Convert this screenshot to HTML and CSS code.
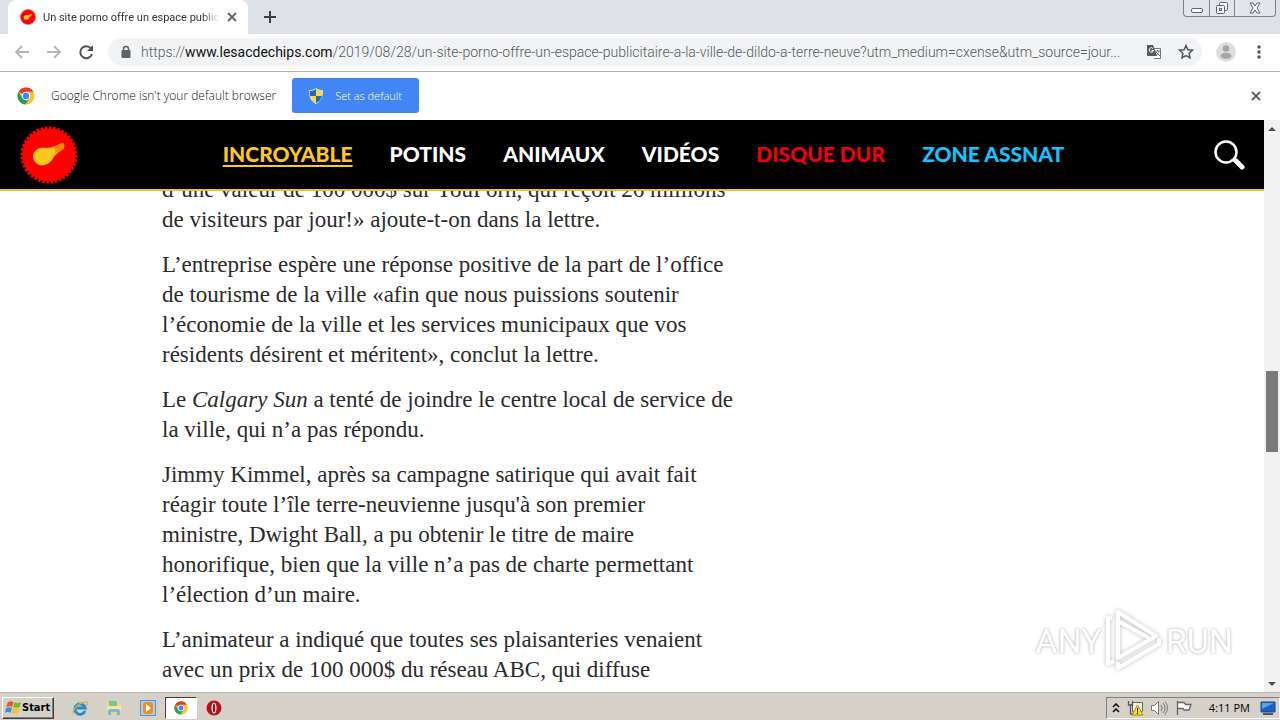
FILE: index.html
```html
<!DOCTYPE html>
<html lang="fr">
<head>
<meta charset="utf-8">
<title>Un site porno offre un espace publicitaire</title>
<link rel="stylesheet" href="styles.css">
</head>
<body>
<svg class="defs" width="0" height="0" aria-hidden="true">
  <symbol id="chrome" viewBox="0 0 18 18">
    <circle cx="9" cy="9" r="8.5" fill="#fbc02d"/>
    <path d="M9 9 1.6 4.8A8.5 8.5 0 0 1 16.4 4.8H9z" fill="#e33b2e"/>
    <path d="M1.6 4.8A8.5 8.5 0 0 0 8.5 17.5L12.6 11 9 9 5.4 11z" fill="#1ea35a"/>
    <circle cx="9" cy="9" r="4.2" fill="#fff"/>
    <circle cx="9" cy="9" r="3.2" fill="#4285f4"/>
  </symbol>
  <symbol id="seal" viewBox="0 0 58 58">
    <circle cx="29" cy="29" r="26.5" fill="#f00"/>
    <circle cx="29" cy="29" r="27" fill="none" stroke="#f00" stroke-width="3" pathLength="80" stroke-dasharray="1.2 0.8"/>
    <path d="M13 30c1-7 7-9 13-8 7 0 11-3 16-5 3 0 3 5 0 7-7 4-8 7-10 10-4 6-12 7-16 3-2-2-3-4-3-7z" fill="#ffc81e"/>
    <path d="M33 21c4-1 6-3 9-4 3 0 3 5 0 7l-7 3c1-3 0-5-2-6z" fill="#ff8a00"/>
  </symbol>
</svg>

<header class="tabstrip">
  <div class="tab">
    <svg class="favicon" viewBox="0 0 58 58"><use href="#seal"/></svg>
    <span class="tab-title">Un site porno offre un espace public</span>
    <button class="icon-btn" aria-label="Close tab"><svg width="10" height="10" viewBox="0 0 10 10"><path d="M1 1l8 8M9 1l-8 8" stroke="#5f6368" stroke-width="1.8"/></svg></button>
  </div>
  <button class="icon-btn new-tab" aria-label="New tab"><svg width="12" height="12" viewBox="0 0 12 12"><path d="M6 0v12M0 6h12" stroke="#3c4043" stroke-width="2"/></svg></button>
  <div class="win-buttons">
    <button aria-label="Minimize"><svg width="14" height="14" viewBox="0 0 14 14"><rect x="1.500" y="7.500" width="11" height="4" rx="1.500" fill="#fff" stroke="#5d6270"/></svg></button>
    <button aria-label="Restore"><svg width="14" height="14" viewBox="0 0 14 14" fill="#f4f5f7" stroke="#5d6270"><rect x="4.500" y="1.500" width="8" height="8" rx="1"/><rect x="1.500" y="4.500" width="8" height="8" rx="1"/><rect x="4.500" y="7.500" width="2" height="2"/></svg></button>
    <button class="wide" aria-label="Close"><svg width="12" height="12" viewBox="0 0 12 12"><path d="M1 1h3l2 3 2-3h3L8 6l3 5H8L6 8l-2 3H1l3-5z" fill="#fff" stroke="#5d6270"/></svg></button>
  </div>
</header>

<div class="toolbar">
  <button class="icon-btn" aria-label="Back"><svg width="16" height="16" viewBox="0 0 16 16" fill="none" stroke="#b4b6b9" stroke-width="1.800"><path d="M15 8H2M8 2L2 8l6 6"/></svg></button>
  <button class="icon-btn" aria-label="Forward"><svg width="16" height="16" viewBox="0 0 16 16" fill="none" stroke="#b4b6b9" stroke-width="1.800"><path d="M1 8h13M8 2l6 6-6 6"/></svg></button>
  <button class="icon-btn" aria-label="Reload"><svg width="16" height="16" viewBox="0 0 16 16"><path d="M13 4.500A6 6 0 1 0 14 10" fill="none" stroke="#505458" stroke-width="2"/><path d="M15 1v6H9z" fill="#505458"/></svg></button>
  <div class="omnibox">
    <svg width="10" height="14" viewBox="0 0 10 14"><path d="M2.500 6V4a2.500 2.500 0 0 1 5 0v2" fill="none" stroke="#5f6368" stroke-width="1.500"/><rect x="0.500" y="5" width="9" height="8" rx="1" fill="#5f6368"/></svg>
    <span class="url">https://<b>www.lesacdechips.com</b>/2019/08/28/un-site-porno-offre-un-espace-publicitaire-a-la-ville-de-dildo-a-terre-neuve?utm_medium=cxense&amp;utm_source=jour...</span>
    <button class="icon-btn" aria-label="Translate"><svg width="16" height="16" viewBox="0 0 16 16"><path d="M7 4.500h7.500v10H8" fill="#fff" stroke="#74777b"/><path d="M1 1h6l4 11H2a1 1 0 0 1-1-1z" fill="#55585c"/><path d="M7 4.500A2.200 2.200 0 1 0 7.500 6.500H5.500" fill="none" stroke="#fff"/><path d="M9 7h5M11.500 6v1M13 7c0 2-2 4-3 4M10 8l4 4" fill="none" stroke="#74777b"/></svg></button>
    <button class="icon-btn star" aria-label="Bookmark"><svg width="16" height="16" viewBox="0 0 16 16"><path d="M8 1.500l1.900 4.200 4.600.5-3.400 3.100.9 4.600L8 11.600 4 13.900l.9-4.600L1.500 6.200l4.600-.5z" fill="none" stroke="#505458" stroke-width="1.500"/></svg></button>
  </div>
  <button class="icon-btn" aria-label="Profile"><svg width="20" height="20" viewBox="0 0 20 20"><circle cx="10" cy="10" r="10" fill="#dedede"/><circle cx="10" cy="6.500" r="3.300" fill="#a5a5a5"/><ellipse cx="10" cy="13.800" rx="5.500" ry="3" fill="#a5a5a5"/></svg></button>
  <button class="icon-btn menu" aria-label="Menu"><svg width="4" height="14" viewBox="0 0 4 14" fill="#505458"><circle cx="2" cy="2" r="1.700"/><circle cx="2" cy="7" r="1.700"/><circle cx="2" cy="12" r="1.700"/></svg></button>
</div>

<div class="infobar">
  <svg width="18" height="18"><use href="#chrome"/></svg>
  <span class="info-text">Google Chrome isn't your default browser</span>
  <button class="default-btn">
    <svg width="14" height="16" viewBox="0 0 14 16"><path d="M7 .5c2 1.500 4 2 6.500 2C13.500 9 12 13 7 15.500 2 13 .5 9 .5 2.500 3 2.500 5 2 7 .5z" fill="#ffd83d" stroke="#d6e2f5"/><path d="M7 1v7H1C.8 6 .8 4.500 1 3c2.500 0 4-.6 6-2zM7 8h6c-.8 3.500-2.500 5.500-6 7z" fill="#2866b8"/></svg>
    Set as default
  </button>
  <button class="icon-btn info-close" aria-label="Dismiss"><svg width="10" height="10" viewBox="0 0 10 10"><path d="M1 1l8 8M9 1l-8 8" stroke="#5f6368" stroke-width="2"/></svg></button>
</div>

<div class="viewport">
  <div class="page">
    <div class="site-header">
      <a class="logo" href="#" aria-label="Le sac de chips"><svg width="58" height="58"><use href="#seal"/></svg></a>
      <nav class="site-nav">
        <a class="active" href="#">INCROYABLE</a>
        <a href="#">POTINS</a>
        <a href="#">ANIMAUX</a>
        <a href="#">VIDÉOS</a>
        <a class="red" href="#">DISQUE DUR</a>
        <a class="blue" href="#">ZONE ASSNAT</a>
      </nav>
      <button class="icon-btn" aria-label="Rechercher"><svg width="32" height="32" viewBox="0 0 32 32" fill="none" stroke="#fff"><circle cx="13" cy="13" r="10.500" stroke-width="2.500"/><path d="M23 22l6 6" stroke-width="5" stroke-linecap="round"/><path d="M20 20l3 3" stroke-width="2"/></svg></button>
    </div>
    <div class="content">
      <article class="article">
        <p>d’une valeur de 100 000$ sur YouPorn, qui reçoit 26 millions<br>de visiteurs par jour!» ajoute-t-on dans la lettre.</p>
        <p>L’entreprise espère une réponse positive de la part de l’office<br>de tourisme de la ville «afin que nous puissions soutenir<br>l’économie de la ville et les services municipaux que vos<br>résidents désirent et méritent», conclut la lettre.</p>
        <p>Le <em>Calgary Sun</em> a tenté de joindre le centre local de service de<br>la ville, qui n’a pas répondu.</p>
        <p>Jimmy Kimmel, après sa campagne satirique qui avait fait<br>réagir toute l’île terre-neuvienne jusqu'à son premier<br>ministre, Dwight Ball, a pu obtenir le titre de maire<br>honorifique, bien que la ville n’a pas de charte permettant<br>l’élection d’un maire.</p>
        <p>L’animateur a indiqué que toutes ses plaisanteries venaient<br>avec un prix de 100 000$ du réseau ABC, qui diffuse</p>
      </article>
    </div>
  </div>
  <div class="scrollbar">
    <svg width="8" height="16" viewBox="0 0 8 16"><path d="M0 11l4-4 4 4z" fill="#505050"/></svg>
    <div class="track-above"></div>
    <div class="thumb"></div>
    <div class="track-below"></div>
    <svg width="8" height="16" viewBox="0 0 8 16"><path d="M0 6l4 4 4-4z" fill="#505050"/></svg>
  </div>
  <div class="watermark">
    <span>ANY</span>
    <svg width="62" height="66" viewBox="0 0 62 66" fill="none" stroke="#fff" stroke-width="4" stroke-linejoin="round"><path d="M15 4v46l38-22z"/><path d="M9 10H5v46l6-3M15 54v6l41-24V30M15 13l31 17"/></svg>
    <span>RUN</span>
  </div>
</div>

<footer class="taskbar">
  <button class="start"><svg width="17" height="16" viewBox="0 0 18 16"><path d="M3 2c3-2 4-1 6 0L7.500 7c-2-1-3-1-6 0z" fill="#e8572a"/><path d="M10 2c3 1 4 1 7 0l-1.500 5c-3 1-5 1-7 0z" fill="#76b82a"/><path d="M1.300 8c3-1 4-1 6 0L6 13c-2-1-4-1-6 0z" fill="#3a8ede"/><path d="M8.300 8c3 1 4 1 7 0L14 13c-3 1-5 1-7 0z" fill="#fbc21a"/></svg>Start</button>
  <div class="quick">
    <button aria-label="Internet Explorer"><svg width="16" height="16" viewBox="0 0 16 16"><path d="M13 11A5.200 5.200 0 1 1 13.200 8H4" fill="none" stroke="#2389d8" stroke-width="2.800"/><path d="M1 14C0 9 9 1 15 2c1 1 0 3-1 4" fill="none" stroke="#e7b52c" stroke-width="1.300"/></svg></button>
    <button aria-label="Explorer"><svg width="16" height="16" viewBox="0 0 16 16"><path d="M1 2h5l1 2h8v10H1z" fill="#f2d479"/><path d="M3 1h8v5H3z" fill="#7fc48b"/><path d="M1 6h14v5H1z" fill="#f9e6a2"/><path d="M2 15v-4q0-2 2-2h8q2 0 2 2v4h-3v-3H5v3z" fill="#75b9e5"/></svg></button>
    <button aria-label="Media Player"><svg width="16" height="16" viewBox="0 0 16 16"><rect x=".5" y=".5" width="15" height="15" fill="#a9cff0" stroke="#5c94c8"/><rect x="3" y="2" width="10" height="12" rx="3" fill="#f58a1f"/><path d="M6 4l5 4-5 4z" fill="#fff"/></svg></button>
    <button class="pressed" aria-label="Chrome"><svg width="14" height="14"><use href="#chrome"/></svg></button>
    <button aria-label="Opera"><svg width="16" height="16" viewBox="0 0 16 16"><circle cx="8" cy="8" r="7.500" fill="#b5121b"/><ellipse cx="8" cy="8" rx="2.500" ry="5.500" fill="#fff"/><ellipse cx="8" cy="8" rx="1.200" ry="4.500" fill="#8d0d14"/></svg></button>
  </div>
  <div class="tray">
    <svg width="8" height="10" viewBox="0 0 8 10" fill="none" stroke="#000" stroke-width="1.500"><path d="M1 4l3-3 3 3M1 9l3-3 3 3"/></svg>
    <svg width="17" height="16" viewBox="0 0 17 16"><path d="M5.500 2.500h10v9h-10z" fill="#eee" stroke="#666"/><path d="M1.500 1v4h4V1M3.500 5v9h5" fill="none" stroke="#555" stroke-width="1.300"/><path d="M10.500 5l5.500 10H5z" fill="#ffd91a" stroke="#a98b00"/><path d="M10.500 8v3.500M10.500 12.500v1.500" stroke="#000"/></svg>
    <svg width="17" height="16" viewBox="0 0 17 16" fill="none" stroke="#777"><path d="M.5 5.500h3l4-4v13l-4-4h-3z" fill="#fff"/><path d="M10 5q2 3 0 6M12 3q4 5 0 10M14 1.500q5 6 0 13"/></svg>
    <svg width="17" height="16" viewBox="0 0 17 16"><path d="M2.500 1v14M3 2.500h6l1.500 2H16L14 10H9L8 8.500H3" fill="#fff" stroke="#666" stroke-width="1.300"/></svg>
    <span class="clock">4:11 PM</span>
    <svg width="16" height="14" viewBox="0 0 16 14"><path d="M1 1h14v10H1z" fill="#1e5fc0" stroke="#164b94"/><path d="M2 2h12L2 8z" fill="#5da1ea"/><path d="M3 13h10" stroke="#555" stroke-width="2"/></svg>
  </div>
</footer>
</body>
</html>
```

FILE: styles.css
```css
* { box-sizing: border-box; }
body {
  margin: 0;
  height: 100vh;
  display: flex;
  flex-direction: column;
  overflow: hidden;
  background: #fff;
  color: #222;
  font-family: "Open Sans", "Noto Sans", sans-serif;
}
button { font: inherit; margin: 0; padding: 0; border: 0; background: none; color: inherit; }
svg { display: block; flex: none; }
a { color: inherit; text-decoration: none; }
.defs { position: absolute; }
.icon-btn { display: flex; align-items: center; justify-content: center; flex: none; }

.tabstrip { flex: none; height: 34px; display: flex; align-items: flex-start; padding-left: 8px; background: #dee1e6; }
.tab { width: 240px; height: 34px; display: flex; align-items: center; gap: 7px; padding: 0 11px 0 12px; background: #fff; border-radius: 8px 8px 0 0; }
.favicon { width: 16px; height: 16px; }
.tab-title { flex: 1; min-width: 0; font-family: Roboto, sans-serif; font-size: 11px; white-space: nowrap; color: #333; mask-image: linear-gradient(to right, #000 90%, transparent); }
.new-tab { height: 34px; margin-left: 16px; }
.win-buttons { margin-left: auto; margin-right: 4px; display: flex; height: 17px; border: 1px solid #7d828e; border-top: 0; border-radius: 0 0 4px 4px; background: #e3e5ea; }
.win-buttons button { width: 25px; display: flex; align-items: center; justify-content: center; }
.win-buttons button + button { border-left: 1px solid #7d828e; }
.win-buttons .wide { width: 41px; }

.toolbar { flex: none; height: 38px; display: flex; align-items: center; gap: 16px; padding: 0 19px 2px 14px; border-bottom: 1px solid #aeb0b3; }
.omnibox { flex: 1; min-width: 0; height: 28px; display: flex; align-items: center; gap: 12px; padding: 0 8px 0 13px; margin-right: -2px; margin-left: -2px; border-radius: 14px; background: #f1f3f4; }
.url { flex: 1; min-width: 0; margin-left: -2px; font-family: Roboto, sans-serif; font-size: 14px; font-weight: 300; line-height: 20px; color: #55595d; white-space: nowrap; }
.url b { font-weight: 400; color: #111; }
.star { margin-left: 4px; }
.menu { margin-left: 5px; }

.infobar { flex: none; height: 48px; display: flex; align-items: center; padding: 0 19px 1px 17px; }
.info-text { margin-left: 16px; font-size: 12px; font-weight: 300; color: #111; }
.default-btn { display: flex; align-items: center; gap: 12px; height: 35px; margin-left: 16px; padding: 0 17px; border-radius: 3px; background: #4285f4; color: #fff; font-size: 11px; font-weight: 300; }
.info-close { margin-left: auto; }

.viewport { position: relative; flex: 1; min-height: 0; display: flex; }
.page { flex: 1; min-width: 0; display: flex; flex-direction: column; overflow: hidden; }
.site-header { flex: none; height: 71px; display: flex; align-items: center; justify-content: space-between; padding: 0 19px 0 20px; background: #000; border-bottom: 2px solid #f2c12e; color: #fff; }
.site-nav { display: flex; gap: 37px; margin-right: 4px; padding-bottom: 2px; font-family: "Lato Black", Lato, sans-serif; font-size: 21px; font-weight: 900; line-height: 28px; }
.active { color: #ffc81e; text-decoration: underline; text-decoration-thickness: 2px; text-underline-offset: 3px; }
.red { color: #f00010; }
.blue { color: #12c4ff; }
.content { flex: 1; min-height: 0; overflow: hidden; }
.article { margin: -16px 0 0 162px; font-family: "Liberation Serif", serif; font-size: 23px; line-height: 30px; white-space: nowrap; color: #2b2b2b; }
.article p { margin: 0 0 15px; }

.scrollbar { width: 16px; display: flex; flex-direction: column; align-items: center; background: #f1f1f1; }
.track-above { flex: 235; }
.thumb { flex: 81; width: 12px; background: #787878; }
.track-below { flex: 224; }

.watermark { position: absolute; right: 47px; bottom: 18px; display: flex; align-items: center; gap: 1px; font-family: Roboto, sans-serif; font-size: 34px; line-height: 44px; color: #fff; text-shadow: 0 0 3px #bbb, 0 0 2px #ccc; }
.watermark svg { filter: drop-shadow(0 0 2px #bbb); }

.taskbar { flex: none; height: 28px; display: flex; align-items: center; padding: 2px 0 0; background: #d5d0c8; border-top: 1px solid #b8b6b0; font-size: 11px; color: #000; }
.start { display: flex; align-items: center; height: 22px; margin-left: 2px; padding: 0 3px 0 2px; border: 1px solid; border-color: #fff #404040 #404040 #fff; box-shadow: inset -1px -1px #808080; font-family: "DejaVu Sans Condensed", sans-serif; font-weight: 700; font-size: 11px; }
.quick { display: flex; align-items: center; margin-left: 9px; }
.quick button { width: 34px; height: 22px; display: flex; align-items: center; justify-content: center; }
.quick .pressed { width: 32px; background: #fff; border: 1px solid; border-color: #404040 #fff #fff #404040; }
.tray { display: flex; align-items: center; gap: 7px; height: 22px; margin-left: auto; padding: 0 3px 0 5px; border: 1px solid; border-color: #808080 #fff #fff #808080; }
.clock { margin: 0 3px 0 10px; }
```
